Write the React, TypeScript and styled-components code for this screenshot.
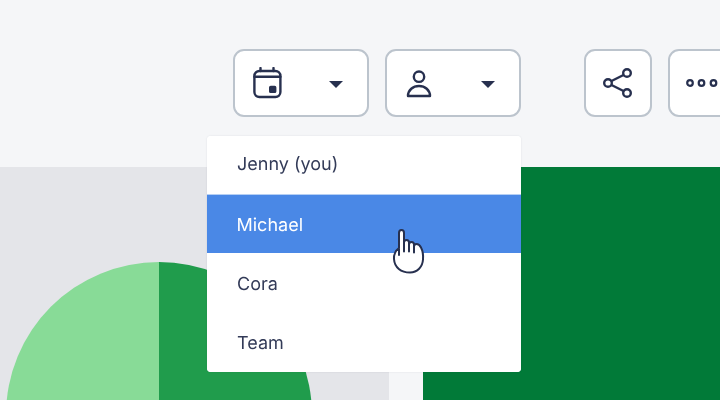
import React from "react";
import styled, { createGlobalStyle } from "styled-components";

const Global = createGlobalStyle`
  html, body { margin: 0; padding: 0; }
  body {
    background: #f5f6f8;
    font-family: Inter, "Liberation Sans", sans-serif;
    text-rendering: geometricPrecision;
  }
`;

const Page = styled.div`
  position: relative;
  width: 720px;
  height: 400px;
  overflow: hidden;
  background: #f5f6f8;
`;

const Toolbar = styled.div`
  height: 167px;
  box-sizing: border-box;
  padding: 49px 0 0 233px;
  display: flex;
  gap: 16px;
`;

const IconButton = styled.div<{ $wide?: boolean; $push?: boolean }>`
  flex: none;
  width: ${(p) => (p.$wide ? "136px" : "68px")};
  height: 68px;
  box-sizing: border-box;
  margin-left: ${(p) => (p.$push ? "47px" : "0")};
  padding: ${(p) => (p.$wide ? "0 24px 0 17px" : "0")};
  background: #fff;
  border: 2px solid #bcc4cd;
  border-radius: 11px;
  display: flex;
  align-items: center;
  justify-content: ${(p) => (p.$wide ? "space-between" : "center")};
  color: #27304f;
`;

const Caret = styled.span`
  width: 0;
  height: 0;
  border-left: 7px solid transparent;
  border-right: 7px solid transparent;
  border-top: 7px solid #27304f;
  margin-top: 2px;
`;

const Content = styled.div`
  display: flex;
  height: 233px;
`;

const GreyPanel = styled.div`
  width: 389px;
  background: #e4e5e9;
  overflow: hidden;
`;

const GreenPanel = styled.div`
  width: 297px;
  margin-left: 34px;
  background: #017a38;
`;

const Menu = styled.ul`
  position: absolute;
  left: 207px;
  top: 136px;
  width: 314px;
  height: 236px;
  margin: 0;
  padding: 0;
  list-style: none;
  background: #fff;
  border-radius: 4px;
  overflow: hidden;
  will-change: transform;
  box-shadow: 0 0 2px rgba(39, 48, 79, 0.12);
`;

const MenuItem = styled.li<{ $active?: boolean }>`
  height: 59px;
  box-sizing: border-box;
  padding-left: ${(p) => (p.$active ? "29.5px" : "30px")};
  padding-top: 2px;
  display: flex;
  align-items: center;
  font-size: 18px;
  background: ${(p) => (p.$active ? "#4a88e6" : "#fff")};
  background-clip: padding-box;
  border-bottom: ${(p) => (p.$active ? "1px solid #fff" : "0")};
  color: ${(p) => (p.$active ? "#fff" : "#333b58")};

  &:first-child {
    padding-top: 0;
    padding-bottom: 2px;
    border-bottom: 1px solid #b5cff4;
  }
`;

const Cursor = styled.svg`
  position: absolute;
  left: 390px;
  top: 228px;
`;

const CalendarIcon = () => (
  <svg width="30" height="32" viewBox="0 0 30 32" fill="none" stroke="#27304f" strokeWidth="2.4" strokeLinecap="round">
    <rect x="2.4" y="4" width="26" height="26" rx="5" />
    <path d="M2.400 9.800h26M8.500 1v3M21.500 1v3" />
    <rect x="17.700" y="19.400" width="6" height="6" rx="1" fill="#27304f" stroke="#27304f" strokeWidth="1.4" />
  </svg>
);

const UserIcon = () => (
  <svg width="30" height="30" viewBox="-2 0 30 30" fill="none" stroke="#27304f" strokeWidth="2.4" strokeLinejoin="round">
    <circle cx="13" cy="8.700" r="5.200" />
    <path d="M2 28c0-6 5-10 11-10s11 4 11 10z" />
  </svg>
);

const ShareIcon = () => (
  <svg width="30" height="32" viewBox="0 0 30 32" fill="none" stroke="#27304f" strokeWidth="2.4">
    <circle cx="5" cy="16" r="3.800" />
    <circle cx="24" cy="6" r="3.800" />
    <circle cx="24" cy="26" r="3.800" />
    <path d="M8.500 14 20.500 8M8.500 18l12 6" />
  </svg>
);

const DotsIcon = () => (
  <svg width="32" height="10" viewBox="0 0 32 10" fill="none" stroke="#27304f" strokeWidth="2.2">
    <circle cx="4" cy="5" r="2.800" />
    <circle cx="15.500" cy="5" r="2.800" />
    <circle cx="27.500" cy="5" r="2.800" />
  </svg>
);

const people = ["Jenny (you)", "Michael", "Cora", "Team"];

export default function App() {
  return (
    <Page>
      <Global />
      <Toolbar>
        <IconButton $wide>
          <CalendarIcon />
          <Caret />
        </IconButton>
        <IconButton $wide>
          <UserIcon />
          <Caret />
        </IconButton>
        <IconButton $push>
          <ShareIcon />
        </IconButton>
        <IconButton>
          <DotsIcon />
        </IconButton>
      </Toolbar>
      <Content>
        <GreyPanel>
          <svg width="389" height="233" viewBox="0 0 389 233">
            <path d="M159 95A153 153 0 0 0 6 248H159Z" fill="#88db97" />
            <path d="M159 95A153 153 0 0 1 312 248H159Z" fill="#209c4c" />
          </svg>
        </GreyPanel>
        <GreenPanel />
      </Content>
      <Menu>
        {people.map((name, i) => (
          <MenuItem key={name} $active={i === 1}>
            {name}
          </MenuItem>
        ))}
      </Menu>
      <Cursor width="36" height="48" viewBox="0 0 36 48" fill="none" stroke="#27304f" strokeWidth="2" strokeLinecap="round" strokeLinejoin="round">
        <path
          d="M9 27V5C9 3 10 2 11.500 2S14 3 14 5V14.500c0-1.500 1-2.500 2.500-2.500S19 13 19 14.500v2c0-1.500 1-2.500 2.500-2.500S24 15 24 16.500v2c0-1.500 1-2.500 2.500-2.500S30 17.500 31 19.500c1.500 3 2.500 6.500 2 12-.5 7.500-5.500 13-13 13C11 44.500 4.500 39.500 4 31c-.3-5 1-8 5-11"
          fill="#fff"
        />
        <path d="M14 14.500v9M19 16.500v7M24 18.500v6" />
      </Cursor>
    </Page>
  );
}
